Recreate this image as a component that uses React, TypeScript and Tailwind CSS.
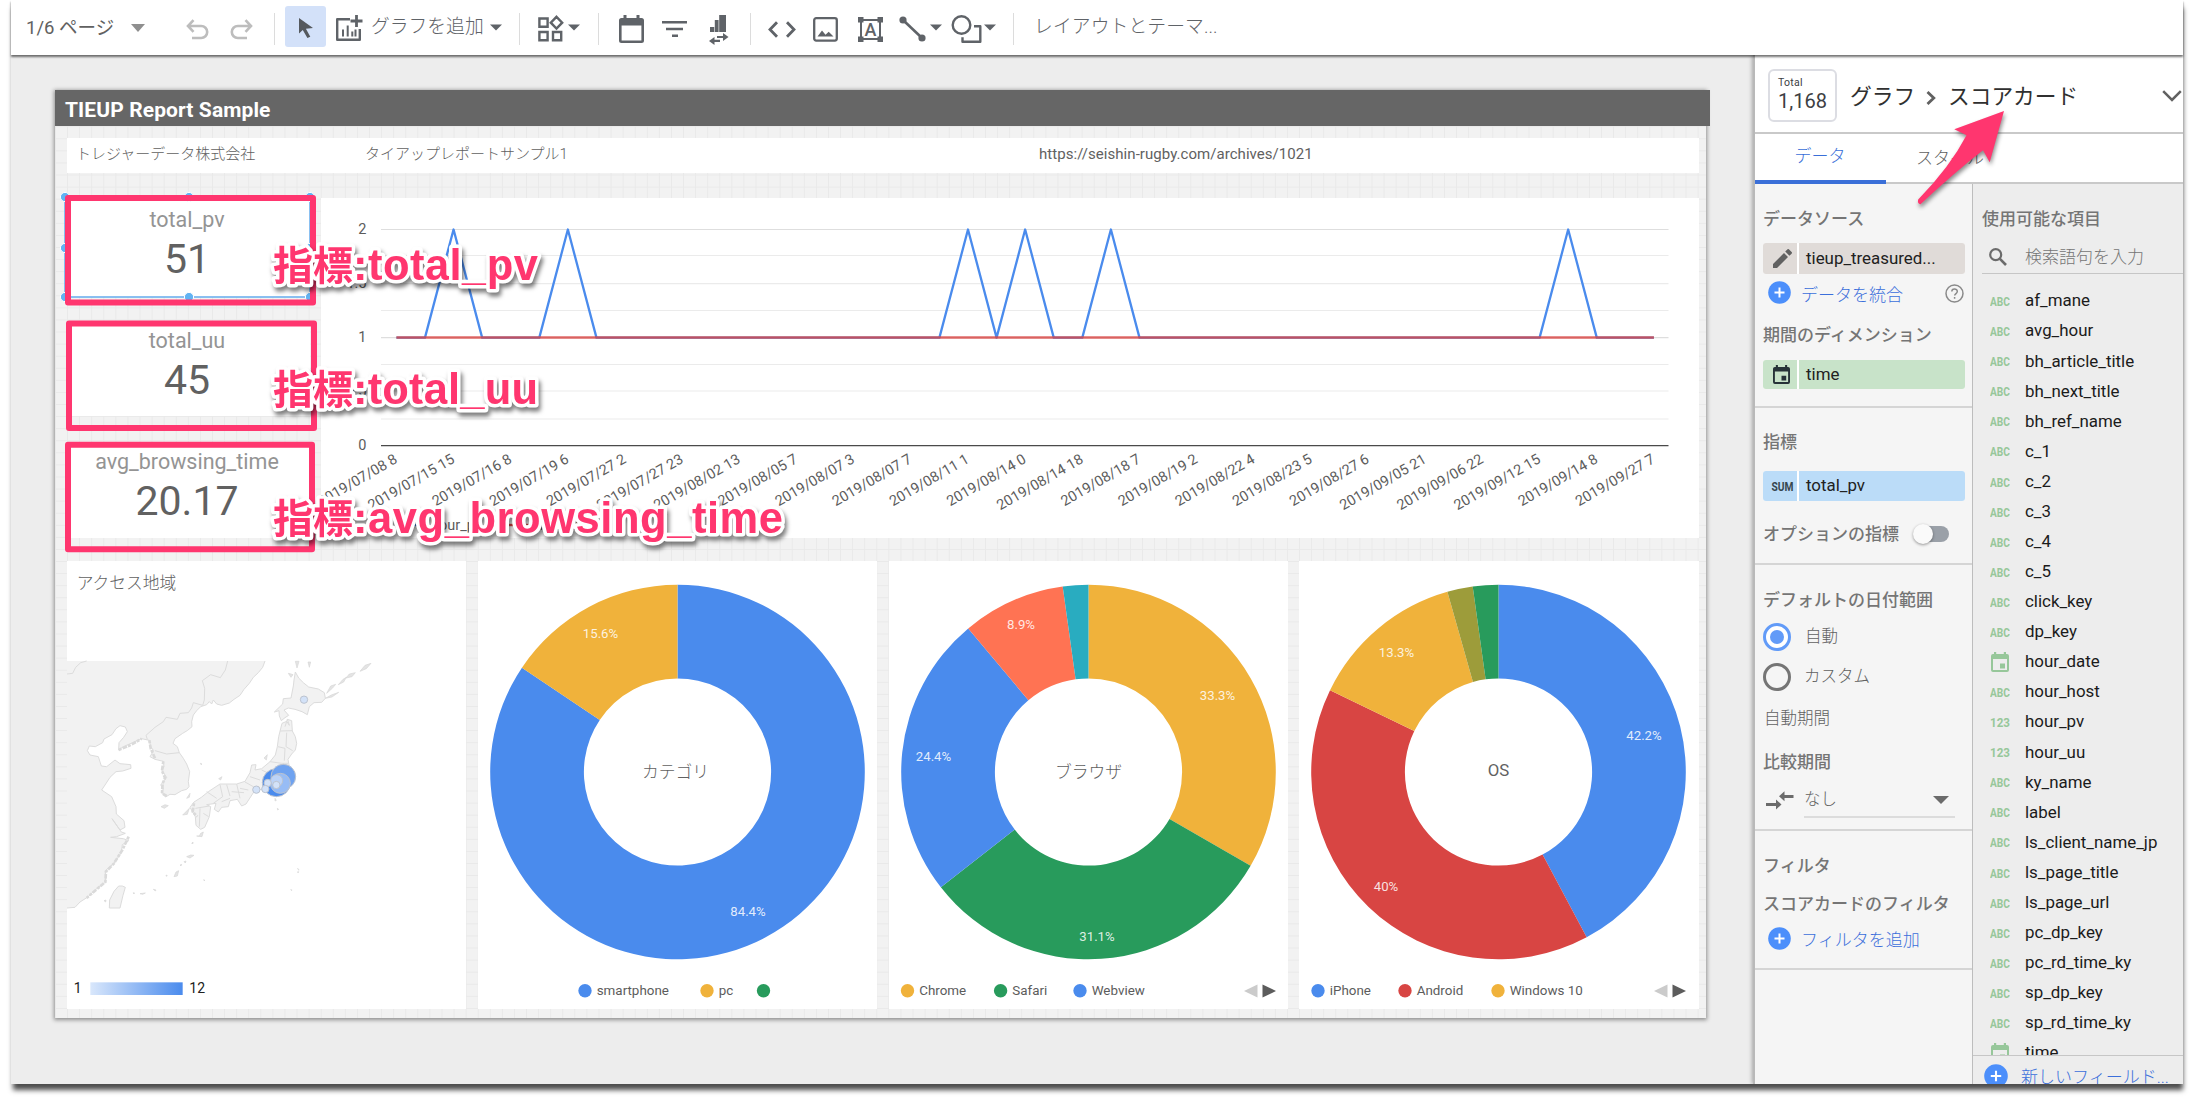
import React from "react";

const JP = "font-['Roboto','Noto_Sans_CJK_JP',sans-serif]";

/* ---------- toolbar ---------- */

const Caret = ({ className = "" }: { className?: string }) => (
  <svg className={`shrink-0 ${className}`} width="12" height="7" viewBox="0 0 12 7">
    <path d="M0 0.5h12L6 6.5z" fill="currentColor" />
  </svg>
);

const Divider = ({ className = "" }: { className?: string }) => (
  <div className={`h-8 w-px shrink-0 bg-[#dcdcdc] ${className}`} />
);

function Toolbar() {
  return (
    <div className="relative z-10 flex h-[55px] shrink-0 items-start bg-white text-[#5f6368] shadow-[0_2px_2px_0_rgba(0,0,0,0.55)]">
      <div className="mt-[14px] ml-[15px] w-[92px] shrink-0 text-[18.5px] leading-7 whitespace-nowrap text-[#616161]">
        1/6 ページ
      </div>
      <svg className="mt-6 ml-[13px] shrink-0 text-[#8f8f8f]" width="14" height="8" viewBox="0 0 14 8">
        <path d="M0 0h14L7 8z" fill="currentColor" />
      </svg>
      <svg className="mt-[19px] ml-[41px] shrink-0" width="23" height="21" viewBox="0 0 23 21" fill="none" stroke="#bdbdbd" strokeWidth="2.6">
        <path d="M7.5 1.2 2 7l5.5 5.8M2 7h13.2a6 6 0 0 1 0 12H6" />
      </svg>
      <svg className="mt-[19px] ml-[21px] shrink-0" width="23" height="21" viewBox="0 0 23 21" fill="none" stroke="#bdbdbd" strokeWidth="2.6">
        <path d="M15.5 1.2 21 7l-5.5 5.8M21 7H7.8a6 6 0 0 0 0 12H17" />
      </svg>
      <Divider className="mt-[13px] ml-[21px]" />
      <div className="mt-[6px] ml-[10px] flex h-[41px] w-[41px] shrink-0 items-center justify-center rounded-[3px] bg-[#d3e1f9]">
        <svg className="mt-1" width="14" height="21" viewBox="0 0 14 21" fill="#55595e">
          <path d="M0 0v15.5l3.8-3.6 4.6 8.2 2.9-1.4-4.4-8L14 10z" />
        </svg>
      </div>
      <svg className="mt-[15px] ml-[9px] shrink-0" width="28" height="27" viewBox="0 0 28 27" fill="none" stroke="currentColor" strokeWidth="2.4">
        <path d="M15 4.2H2.2v20.6h22.600V14" strokeLinejoin="round" />
        <path d="M21.500 0v12M15.500 6h12" strokeWidth="2.800" />
        <path d="M8 21.500v-7M12.700 21.500v-11M17.300 21.500v-5M20.500 21.500v-7" strokeWidth="2" />
      </svg>
      <div className="mt-[13px] ml-[8px] w-[117px] shrink-0 text-[18.8px] leading-7 font-light whitespace-nowrap">グラフを追加</div>
      <Caret className="mt-6 ml-[2px]" />
      <Divider className="mt-[13px] ml-[17px]" />
      <svg className="mt-[15px] ml-[18px] shrink-0" width="26" height="27" viewBox="0 0 26 27" fill="none" stroke="currentColor" strokeWidth="2.4">
        <path d="M1.400 3.500h8.200v8.200H1.400zM1.400 17h8.200v8.200H1.400zM15 17h8.200v8.200H15zM18.500 1.800l5.700 5.900-5.700 5.900-5.700-5.900z" />
      </svg>
      <Caret className="mt-6 ml-[4px]" />
      <Divider className="mt-[13px] ml-[18px]" />
      <svg className="mt-[15px] ml-[20px] shrink-0" width="25" height="28" viewBox="0 0 25 28">
        <path d="M2.500 3h20A2.500 2.500 0 0 1 25 5.500v20a2.500 2.500 0 0 1-2.500 2.500h-20A2.500 2.500 0 0 1 0 25.500v-20A2.500 2.500 0 0 1 2.500 3zM2.600 10.500v15h19.800v-15z" fill="currentColor" fillRule="evenodd" />
        <path d="M4.500 0h3v4h-3zM17.500 0h3v4h-3z" fill="currentColor" />
      </svg>
      <svg className="mt-[20px] ml-[18px] shrink-0" width="25" height="18" viewBox="0 0 25 18" stroke="currentColor" strokeWidth="2.500">
        <path d="M0 2.200h25M4 9h17M10 15.800h6" />
      </svg>
      <svg className="mt-[15px] ml-[22px] shrink-0" width="20" height="30" viewBox="0 0 20 30" fill="currentColor">
        <path d="M1 12h4.500V5H10V0h7v17H1z" />
        <path d="M9.800 0v17M5.500 5v12" stroke="#fff" strokeWidth="0.600" />
        <path d="M8 21h6v-3l5.500 4-5.500 4v-3H8zM11 24.800H5.500V22L0 26l5.500 4v-3H11z" />
      </svg>
      <Divider className="mt-[13px] ml-[21px]" />
      <svg className="mt-[21px] ml-[17px] shrink-0" width="28" height="17" viewBox="0 0 28 17" fill="none" stroke="currentColor" strokeWidth="2.800">
        <path d="M9 1.200 2 8.500l7 7.300M19 1.200l7 7.300-7 7.300" />
      </svg>
      <svg className="mt-[17px] ml-[17px] shrink-0" width="25" height="25" viewBox="0 0 25 25" fill="none" stroke="currentColor" strokeWidth="2.300">
        <rect x="1.200" y="1.200" width="22.600" height="22.400" rx="2" />
        <path d="M4.500 19.500l4.500-6 3.500 4.200 3.200-2.900 4.800 4.700z" fill="currentColor" stroke="none" />
      </svg>
      <svg className="mt-[17px] ml-[20px] shrink-0" width="25" height="25" viewBox="0 0 25 25" fill="currentColor">
        <path d="M3 3h19v19H3z" fill="none" stroke="currentColor" strokeWidth="2" />
        <path d="M0 0h5.500v5.500H0zM19.500 0H25v5.500h-5.500zM0 19.500h5.500V25H0zM19.500 19.500H25V25h-5.500z" />
        <text x="12.500" y="19" fontSize="18" textAnchor="middle" fontFamily="Roboto" fontWeight="500">A</text>
      </svg>
      <svg className="mt-[16px] ml-[16px] shrink-0" width="27" height="26" viewBox="0 0 27 26">
        <path d="M4 4l19 18" stroke="currentColor" strokeWidth="2.600" />
        <circle cx="4" cy="4" r="3.600" fill="currentColor" />
        <circle cx="23" cy="22" r="3.600" fill="currentColor" />
      </svg>
      <Caret className="mt-6 ml-[4px]" />
      <svg className="mt-[15px] ml-[9px] shrink-0" width="31" height="28" viewBox="0 0 31 28" fill="none" stroke="currentColor" strokeWidth="2.400">
        <circle cx="10.500" cy="10" r="8.800" />
        <path d="M23 11.200h6.300v15.500H11.500v-4.500" strokeLinejoin="round" />
      </svg>
      <Caret className="mt-6 ml-[2px]" />
      <Divider className="mt-[13px] ml-[17px]" />
      <div className="mt-[13px] ml-[20px] text-[18.8px] leading-7 font-light tracking-[0.1px] whitespace-nowrap">レイアウトとテーマ...</div>
    </div>
  );
}

/* ---------- report widgets ---------- */

function Scorecard({ name, value, className }: { name: string; value: string; className: string }) {
  return (
    <div className={`flex w-[243px] flex-col items-center bg-white pr-[3px] ${className}`}>
      <div className="text-[21.5px] leading-6 text-[#949494]">{name}</div>
      <div className="mt-[3px] text-[41px] leading-[48px] text-[#616161]">{value}</div>
    </div>
  );
}

const AXIS = [
  "2019/07/08 8", "2019/07/15 15", "2019/07/16 8", "2019/07/19 6", "2019/07/27 2", "2019/07/27 23",
  "2019/08/02 13", "2019/08/05 7", "2019/08/07 3", "2019/08/07 7", "2019/08/11 1", "2019/08/14 0",
  "2019/08/14 18", "2019/08/18 7", "2019/08/19 2", "2019/08/22 4", "2019/08/23 5", "2019/08/27 6",
  "2019/09/05 21", "2019/09/06 22", "2019/09/12 15", "2019/09/14 8", "2019/09/27 7",
];
const PEAKS = [2, 6, 20, 22, 25, 41];
const px = (i: number) => 75.4 + i * 28.58;

function LineChart() {
  const pts = Array.from({ length: 45 }, (_, i) => `${px(i)},${PEAKS.includes(i) ? 31.500 : 139.600}`).join(" ");
  const ticks: [string, number][] = [["2", 31.5], ["1.5", 85.7], ["1", 139.6], ["0.5", 193.5], ["0", 247.7]];
  return (
    <svg className="ml-[11px] shrink-0 bg-white" width="1378" height="340" viewBox="0 0 1378 340" fontFamily="Roboto">
      {[31.5, 57.5, 85.7, 112.5, 139.600, 166.500, 193, 221].map((y, i) => (
        <path key={y} d={`M60 ${y}H1347.500`} stroke={i % 4 === 0 ? "#dedede" : "#ebebeb"} strokeWidth="1.200" />
      ))}
      <path d="M60 247.700H1347.500" stroke="#4a4a4a" strokeWidth="1.300" />
      {ticks.map(([t, y]) => (
        <text key={t} x="45.500" y={y + 4.700} fontSize="14.500" textAnchor="end" fill="#5c5c5c">{t}</text>
      ))}
      <polyline points={pts} fill="none" stroke="#4a8bed" strokeWidth="2.300" strokeLinejoin="round" />
      <path d={`M75.400 139.600H${px(44)}`} stroke="#d84543" strokeWidth="2.500" opacity="0.800" />
      {AXIS.map((t, i) => (
        <text key={t} transform={`translate(${px(i * 2) + 2} ${264}) rotate(-30)`} fontSize="14.500" textAnchor="end" fill="#5c5c5c">{t}</text>
      ))}
      <path d="M83 327h22" stroke="#4a8bed" strokeWidth="2.400" />
      <text x="110" y="332" fontSize="14.500" fill="#5c5c5c">hour_pv</text>
      <path d="M187 327h22" stroke="#d84543" strokeWidth="2.400" />
      <text x="214" y="332" fontSize="14.500" fill="#5c5c5c">hour_uu</text>
    </svg>
  );
}

const LAND = [
  "M81 333H675L668 352L655 368L640 382L628 400L612 418L600 436L582 448L568 459L545 466L530 462L520 450L515 462L508 455L500 464L482 470L470 482L460 495L455 515L456 530L443 541L428 550L405 566L399 580L412 590L418 608L430 625L440 642L449 665L445 695L447 710L440 718L425 722L405 734L390 733L377 741L366 730L370 715L362 705L372 692L380 682L366 662L372 650L370 634L345 628L330 620L341 602L332 590L328 571L305 566L280 577L250 590L236 600L237 578L251 562L262 545L256 531L240 527L228 536L216 554L192 567L188 578L166 590L148 588L142 602L150 615L175 620L184 648L200 650L225 630L240 641L272 644L273 655L248 663L228 665L210 682L197 702L185 720L215 740L228 770L229 792L252 812L255 832L240 840L216 806L244 846L256 850L230 860L212 862L250 866L266 872L247 884L244 908L222 940L196 962L197 996L165 1020L145 1040L120 1056L105 1072L81 1074Z",
  "M247 1008L256 1012L249 1036L240 1074H208L209 1050L222 1024L236 1008Z",
  "M766 366L776 384L790 398L806 411L835 417L853 428L856 445L845 457L822 458L808 470L802 494L786 485L765 478L745 474L732 480L746 496L735 503L724 512L718 498L717 482L703 486L728 462L730 446L753 444L760 408L762 390Z",
  "M726 520L740 514L748 526L742 508L755 512L757 543L766 560L770 580L766 600L755 612L744 628L748 650L760 680L742 712L700 726L682 724L660 718L640 728L618 762L605 768L592 748L570 752L565 770L545 772L535 786L523 778L528 760L500 764L512 770L508 800L494 832L482 838L468 826L466 800L450 772L462 756L484 742L505 725L540 702L590 702L615 694L630 668L635 645L648 644L645 660L665 656L690 635L706 615L712 590L716 560Z",
];
const BORDERS = [
  "M563 333L556 360L541 383L512 374L487 392L494 415L493 450L488 466L460 458L455 474L445 488L420 490L412 508L378 502L370 515L345 532L318 556L322 568",
  "M345 602L380 612L418 608",
  "M720 543L757 542M740 548L738 590L758 602M714 590L735 595L733 632M690 635L725 640L745 640M742 508L735 530M665 660L690 672M630 680L660 690M615 696L640 710M560 704L570 738M590 702L600 745M540 704L548 740L520 760M500 725L530 745M600 715L625 720M466 775L508 768M480 775L478 830M490 790L506 800M575 725L612 728M545 755L570 745",
];
const ISLANDS =
  "M860 430l12-22 15-5-10 12zM895 404l14-16 10-6-8 14zM918 384l10-12 18-4-10 12zM960 364l15-18 18-6-14 16zM856 445l18-10 22-8-20 14zM766 334l5 20 6-20zM804 336l4 16 4-16zM745 370l8 12 6-8-6-2zM672 624l10-10-3 16zM536 686l10-6-4 10zM363 770l12-6 10 3-12 8zM440 745l10-15-2 12zM428 795l12-12 8-8-6 18zM470 858l8 0 4-8 8-4-4 14zM440 920l12-5 10 1-12 8zM402 980l6-14 8-4-4 16zM432 935l6-2-2 6zM300 1031l16-2-8 4zM340 1018l8 2-2 3zM705 745l4 6-4 2zM712 775l4 3-3 2zM481 640l5 2-3 2zM491 989l4 2-3 1zM752 1019l3 0 0 3zM773 955l3 3 0 3zM773 965l3 0-2 4zM280 1028l4 1-3 3zM192 1052l6-2-1 6zM378 975l4 2-3 2zM420 945l5-2-2 5zM455 880l4-4 0 5z";

function GeoMap() {
  return (
    <svg className="w-[399px] shrink-0 bg-white" width="399" height="448" viewBox="81 33 1197 1344" fontFamily="Roboto, 'Noto Sans CJK JP'">
      <defs>
        <linearGradient id="scale">
          <stop offset="0" stopColor="#d9e7fb" />
          <stop offset="1" stopColor="#4a8bed" />
        </linearGradient>
      </defs>
      <text x="110" y="118" fontSize="50.300" fontWeight="300" fill="#616161">アクセス地域</text>
      <g fill="#f2f2f2" stroke="#dcdcdc" strokeWidth="3" strokeLinejoin="round">
        {LAND.slice(1).map((d) => <path key={d} d={d} />)}
      </g>
      <path d={LAND[0]} fill="#f2f2f2" />
      <path d={LAND[0].replace("M81 333H675L", "M675 333L").replace("L81 1074Z", "L81 1074")} fill="none" stroke="#dcdcdc" strokeWidth="3" strokeLinejoin="round" />
      <path d="M81 372L98 370L107 352L122 338L140 333" fill="none" stroke="#dcdcdc" strokeWidth="3" />
      {BORDERS.map((d) => <path key={d} d={d} fill="none" stroke="#dcdcdc" strokeWidth="3" strokeLinejoin="round" />)}
      <path d="M370 634L366 662L375 684L368 700L366 730L380 738M328 571L332 595L345 625M266 860L247 900L222 940L198 965L196 996L165 1022L140 1044M462 760L458 785L472 800M236 600L270 586L305 566" fill="none" stroke="#dadada" strokeWidth="8" strokeDasharray="9 4 14 3" />
      <path d={ISLANDS} fill="#e4e4e4" stroke="#d6d6d6" strokeWidth="2" />
      <g stroke="#bcc3cf" strokeWidth="3">
        <circle cx="792" cy="449" r="11" fill="#d3e2f8" />
        <circle cx="709" cy="698" r="42" fill="#4a8bed" />
        <circle cx="730" cy="680" r="37" fill="#6ea2f0" />
        <circle cx="721" cy="700" r="30" fill="#97bcf5" />
        <circle cx="710" cy="692" r="18" fill="#bcd3f7" />
        <circle cx="709" cy="705" r="11" fill="#d3e2f8" />
        <circle cx="683" cy="699" r="11" fill="#d3e2f8" />
        <circle cx="676" cy="717" r="11" fill="#d3e2f8" />
        <circle cx="649" cy="719" r="11" fill="#d3e2f8" />
      </g>
      <rect x="151" y="1297" width="277" height="38" fill="url(#scale)" />
      <text x="101" y="1329" fontSize="42" fill="#212121">1</text>
      <text x="448" y="1329" fontSize="42" fill="#212121">12</text>
    </svg>
  );
}

type Slice = { pct: number; color: string; label?: string; lx?: number; ly?: number };
type Legend = { x: number; color: string; name: string };

function Donut({ title, slices, legend, pager, width, ty = 217 }: { title: string; slices: Slice[]; legend: Legend[]; pager?: boolean; width: number; ty?: number }) {
  const cx = 199.500;
  const cy = 211;
  const R = 187.300;
  const r = 93.600;
  let acc = 0;
  const at = (t: number, rad: number) => `${cx + rad * Math.sin(t * 2 * Math.PI)} ${cy - rad * Math.cos(t * 2 * Math.PI)}`;
  return (
    <svg className="shrink-0 bg-white" width={width} height="448" viewBox={`0 0 ${width} 448`} fontFamily="Roboto, 'Noto Sans CJK JP'">
      {slices.map((s) => {
        const a = acc;
        const b = (acc += s.pct / 100);
        const big = s.pct > 50 ? 1 : 0;
        return <path key={s.color + a} fill={s.color} d={`M${at(a, R)}A${R} ${R} 0 ${big} 1 ${at(b, R)}L${at(b, r)}A${r} ${r} 0 ${big} 0 ${at(a, r)}Z`} />;
      })}
      {slices.map((s) => s.label && (
        <text key={s.label} x={s.lx} y={(s.ly ?? 0) + 4} fontSize="13.200" textAnchor="middle" fill="#fff" fillOpacity="0.850">{s.label}</text>
      ))}
      <text x={cx - (pager ? 0 : 2)} y={ty} fontSize="16.800" fontWeight={title === "OS" ? 400 : 300} textAnchor="middle" fill="#616161">{title}</text>
      {legend.map((l) => (
        <g key={l.x}>
          <circle cx={l.x} cy="429.700" r="6.700" fill={l.color} />
          <text x={l.x + 11.700} y="434" fontSize="13.400" fill="#5c5c5c">{l.name}</text>
        </g>
      ))}
      {pager && <path d="M355 430l13.500-6.500v13z" fill="#cbcbcb" />}
      {pager && <path d="M387 430l-13.500-6.500v13z" fill="#5c5c5c" />}
    </svg>
  );
}

function Report() {
  return (
    <div className="relative mt-[35px] ml-[44px] h-[928px] w-[1651px] bg-[#f2f2f2] bg-[linear-gradient(to_right,#e9e9e9_1px,transparent_1px),linear-gradient(to_bottom,#e9e9e9_1px,transparent_1px)] bg-[size:12.080px_12.080px] shadow-[0_1px_4px_1px_rgba(0,0,0,0.4)]">
      <div className="flex h-9 w-[1655px] items-center bg-[#666] pt-1.5 pl-[10px] text-[21px] font-bold text-white">
        <span className="tracking-[0.100px] whitespace-nowrap">TIEUP Report Sample</span>
      </div>
      <div className="mt-3 ml-3 flex h-[35px] w-[1632px] items-center bg-white pb-[3px] text-[15px] text-[#616161]">
        <span className="w-[288px] pl-[9px] font-light">トレジャーデータ株式会社</span>
        <span className="w-[672px] pl-[10px] font-light">タイアップレポートサンプル1</span>
        <span className="pl-3 tracking-[0.050px]">https://seishin-rugby.com/archives/1021</span>
      </div>
      <div className="mt-[25px] ml-3 flex h-[340px]">
        <div className="flex w-[243px] shrink-0 flex-col">
          <Scorecard name="total_pv" value="51" className="h-[99px] pt-[10px]" />
          <Scorecard name="total_uu" value="45" className="mt-[24px] h-[95px] pt-[8px]" />
          <Scorecard name="avg_browsing_time" value="20.17" className="mt-[27px] h-[95px] pt-[7px]" />
        </div>
        <LineChart />
      </div>
      <div className="mt-[23px] ml-3 flex h-[448px]">
        <GeoMap />
        <div className="ml-3 flex">
          <Donut
            width={399} title="カテゴリ"
            slices={[
              { pct: 84.4, color: "#4a8bed", label: "84.4%", lx: 270, ly: 351 },
              { pct: 15.6, color: "#f0b23b", label: "15.6%", lx: 122.500, ly: 72.500 },
            ]}
            legend={[
              { x: 107, color: "#4a8bed", name: "smartphone" },
              { x: 229, color: "#f0b23b", name: "pc" },
              { x: 285.500, color: "#289b5c", name: "" },
            ]}
          />
        </div>
        <div className="ml-3 flex">
          <Donut
            width={399} title="ブラウザ" pager
            slices={[
              { pct: 33.35, color: "#f0b23b", label: "33.3%", lx: 328.500, ly: 134.500 },
              { pct: 31.1, color: "#289b5c", label: "31.1%", lx: 208, ly: 375.500 },
              { pct: 24.45, color: "#4a8bed", label: "24.4%", lx: 44.500, ly: 195.500 },
              { pct: 8.900, color: "#ff7353", label: "8.9%", lx: 132, ly: 64 },
              { pct: 2.200, color: "#29acc0" },
            ]}
            legend={[
              { x: 18.500, color: "#f0b23b", name: "Chrome" },
              { x: 111.600, color: "#289b5c", name: "Safari" },
              { x: 191, color: "#4a8bed", name: "Webview" },
            ]}
          />
        </div>
        <div className="ml-[11px] flex">
          <Donut
            width={400} title="OS" pager ty={214.500}
            slices={[
              { pct: 42.2, color: "#4a8bed", label: "42.2%", lx: 345, ly: 174.500 },
              { pct: 40, color: "#d84543", label: "40%", lx: 87, ly: 326 },
              { pct: 13.4, color: "#f0b23b", label: "13.3%", lx: 97.500, ly: 92 },
              { pct: 2.2, color: "#9d9c3a" },
              { pct: 2.2, color: "#289b5c" },
            ]}
            legend={[
              { x: 19, color: "#4a8bed", name: "iPhone" },
              { x: 106, color: "#d84543", name: "Android" },
              { x: 199, color: "#f0b23b", name: "Windows 10" },
            ]}
          />
        </div>
      </div>
    </div>
  );
}

/* ---------- properties panel ---------- */

const Heading = ({ children, className = "" }: { children: React.ReactNode; className?: string }) => (
  <div className={`ml-2 flex h-6 items-center pt-[3px] text-[17px] font-medium whitespace-nowrap text-[#757575] ${className}`}>{children}</div>
);

const Rule = ({ className = "" }: { className?: string }) => <div className={`h-[2px] w-full bg-[#d5d5d5] ${className}`} />;

const Plus = ({ size = 23 }: { size?: number }) => (
  <svg className="shrink-0" width={size} height={size} viewBox="0 0 23 23">
    <circle cx="11.500" cy="11.500" r="11.300" fill="#4c8ffb" />
    <path d="M11.500 6.500v10M6.500 11.500h10" stroke="#fff" strokeWidth="2" />
  </svg>
);

const DateIcon = ({ size = 18 }: { size?: number }) => (
  <svg className="shrink-0" width={size} height={(size * 20) / 18} viewBox="0 0 18 20" fill="currentColor">
    <path fillRule="evenodd" d="M2 2h14a2 2 0 0 1 2 2v14a2 2 0 0 1-2 2H2a2 2 0 0 1-2-2V4a2 2 0 0 1 2-2zM2 7v11h14V7z" />
    <path d="M3 0h2.200v3H3zM12.800 0H15v3h-2.200zM9 11.500h5v5H9z" />
  </svg>
);

function Chip({ icon, label, className, tone }: { icon: React.ReactNode; label: string; className: string; tone: string }) {
  return (
    <div className={`ml-2 flex w-[202px] gap-[2px] overflow-hidden rounded-[3px] bg-white ${className}`}>
      <div className={`flex w-[34px] items-center justify-center ${tone}`}>{icon}</div>
      <div className={`flex flex-1 items-center pl-[7px] text-[16.900px] whitespace-nowrap text-[#212121] ${tone}`}>{label}</div>
    </div>
  );
}

const TypeTag = ({ kind }: { kind: string }) =>
  kind === "DATE" ? (
    <span className="flex w-[20px] justify-center"><DateIcon /></span>
  ) : (
    <svg width="20" height="12" viewBox="0 0 20 12">
      <text x="0" y="11" fontSize="13.500" fontFamily="Roboto" fontWeight="700" fill="currentColor" textLength="20" lengthAdjust="spacingAndGlyphs">{kind}</text>
    </svg>
  );

const FIELDS: [string, string][] = [
  ["ABC", "af_mane"], ["ABC", "avg_hour"], ["ABC", "bh_article_title"], ["ABC", "bh_next_title"], ["ABC", "bh_ref_name"],
  ["ABC", "c_1"], ["ABC", "c_2"], ["ABC", "c_3"], ["ABC", "c_4"], ["ABC", "c_5"], ["ABC", "click_key"], ["ABC", "dp_key"],
  ["DATE", "hour_date"], ["ABC", "hour_host"], ["123", "hour_pv"], ["123", "hour_uu"], ["ABC", "ky_name"], ["ABC", "label"],
  ["ABC", "ls_client_name_jp"], ["ABC", "ls_page_title"], ["ABC", "ls_page_url"], ["ABC", "pc_dp_key"], ["ABC", "pc_rd_time_ky"],
  ["ABC", "sp_dp_key"], ["ABC", "sp_rd_time_ky"], ["DATE", "time"],
];

function Settings() {
  return (
    <div className="flex w-[217px] shrink-0 flex-col bg-[#f5f5f5]">
      <Heading className="mt-[22px]">データソース</Heading>
      <Chip className="mt-[13px] h-[31px]" tone="bg-[#e0dbd8]" label="tieup_treasured..." icon={
        <svg className="ml-1" width="19" height="19" viewBox="0 0 19 19" fill="#616161"><path d="M0 15v4h4L15 8l-4-4zM18.600 4.700a1.300 1.300 0 0 0 0-1.800L16.100.4a1.300 1.300 0 0 0-1.800 0L12.200 2.600l4.200 4.200z" /></svg>
      } />
      <div className="mt-[5px] ml-[13px] flex h-[26px] items-center">
        <Plus />
        <span className="mt-[7px] ml-[10px] w-[140px] text-[17px] font-light text-[#3b6fdb]">データを統合</span>
        <svg className="mt-0.5 ml-[4px]" width="19" height="19" viewBox="0 0 19 19" fill="none" stroke="#8a8a8a" strokeWidth="1.500">
          <circle cx="9.500" cy="9.500" r="8.500" />
          <path d="M6.800 7.600c0-3.400 5.500-3.400 5.500-.1 0 2-2.600 2.100-2.600 4.100M9.600 13v1.800" />
        </svg>
      </div>
      <Heading className="mt-[17px]">期間のディメンション</Heading>
      <Chip className="mt-[14px] h-[29px]" tone="bg-[#c8e3c9]" label="time" icon={<span className="ml-0.5 text-[#263238]"><DateIcon size={17} /></span>} />
      <Rule className="mt-[17px]" />
      <Heading className="mt-[21px]">指標</Heading>
      <Chip className="mt-[18px] h-[30px]" tone="bg-[#bbdcf8]" label="total_pv" icon={
        <svg className="ml-1" width="23" height="12" viewBox="0 0 23 12"><text x="0.500" y="10.500" fontSize="12.500" fontWeight="700" fontFamily="Roboto" fill="#37474f" textLength="22" lengthAdjust="spacingAndGlyphs">SUM</text></svg>
      } />
      <div className="mt-[20px] flex h-6 items-center">
        <Heading className="w-[146px]">オプションの指標</Heading>
        <div className="relative mt-0.5 ml-[8px] h-4 w-8 rounded-full bg-[#9aa0a8]">
          <div className="absolute -top-[2px] -left-[4px] h-5 w-5 rounded-full bg-[#fafafa] shadow-[0_1px_3px_rgba(0,0,0,0.4)]" />
        </div>
      </div>
      <Rule className="mt-[18px]" />
      <Heading className="mt-[22px]">デフォルトの日付範囲</Heading>
      <div className="mt-[12px] ml-2 flex h-7 items-center text-[16.500px] font-light text-[#616161]">
        <div className="flex h-7 w-7 items-center justify-center rounded-full border-[3.500px] border-[#629bf8] bg-white"><div className="h-[14px] w-[14px] rounded-full bg-[#629bf8]" /></div>
        <span className="mt-px ml-[14px]">自動</span>
      </div>
      <div className="mt-[12px] ml-2 flex h-7 items-center text-[16.500px] font-light text-[#616161]">
        <div className="h-7 w-7 rounded-full border-[3.500px] border-[#757575]" />
        <span className="mt-px ml-[13px]">カスタム</span>
      </div>
      <div className="mt-[15px] ml-[9px] flex h-6 items-center pt-[3px] text-[16.500px] font-light text-[#616161]">自動期間</div>
      <Heading className="mt-[19px]">比較期間</Heading>
      <div className="mt-[10px] ml-[11px] flex h-[35px]">
        <svg className="mt-[8px] shrink-0" width="28" height="19" viewBox="0 0 28 19" fill="#6b6b6b">
          <path d="M0 12h10V8.500l5.500 5-5.500 5V15H0zM27.500 4H18.500V.2l-5.500 5 5.500 5V7h9z" />
        </svg>
        <div className="ml-[10px] flex w-[151px] justify-between border-b-2 border-[#dcdcdc] text-[#616161]">
          <span className="mt-[5px] text-[16.500px] font-light">なし</span>
          <svg className="mt-[13px] mr-[6px]" width="16" height="8" viewBox="0 0 16 8"><path d="M0 0h16L8 8z" fill="#6b6b6b" /></svg>
        </div>
      </div>
      <Rule className="mt-[11px]" />
      <Heading className="mt-[22px]">フィルタ</Heading>
      <Heading className="mt-[14px]">スコアカードのフィルタ</Heading>
      <div className="mt-[10px] ml-[13px] flex h-[26px] items-center">
        <Plus />
        <span className="mt-[6px] ml-[10px] text-[17px] font-light text-[#3b6fdb]">フィルタを追加</span>
      </div>
      <Rule className="mt-[17px]" />
    </div>
  );
}

function Fields() {
  return (
    <div className="flex min-w-0 flex-1 flex-col border-l border-[#bdbdbd] bg-[#ededed]">
      <div className="mt-[22px] ml-[9px] flex h-6 shrink-0 items-center pt-[3px] text-[17px] font-medium text-[#757575]">使用可能な項目</div>
      <div className="mt-[10px] ml-[9px] flex h-[34px] shrink-0 items-center border-b border-[#c6c6c6] text-[17px] font-light text-[#757575]">
        <svg className="ml-[7px]" width="18" height="18" viewBox="0 0 18 18" fill="none" stroke="#6b6b6b" strokeWidth="2.200">
          <circle cx="6.700" cy="6.700" r="5.500" /><path d="M10.700 10.700l6.300 6.300" strokeWidth="2.600" />
        </svg>
        <span className="mt-[3px] ml-[18px]">検索語句を入力</span>
      </div>
      <div className="flex min-h-0 flex-1 flex-col overflow-hidden pt-[12px] pl-[17px]">
        {FIELDS.map(([k, n]) => (
          <div key={n} className="flex h-[30.080px] shrink-0 items-center text-[#97c79a]">
            <TypeTag kind={k} />
            <span className="ml-[15px] text-[16.900px] whitespace-nowrap text-[#1b1b1b]">{n}</span>
          </div>
        ))}
      </div>
      <div className="flex h-[29px] shrink-0 items-start overflow-hidden border-t border-[#c6c6c6] pl-[11px]">
        <span className="mt-[8px]"><Plus size={24} /></span>
        <span className="mt-[9px] ml-[13px] text-[17px] font-light whitespace-nowrap text-[#3b6fdb]">新しいフィールド...</span>
      </div>
    </div>
  );
}

function Panel() {
  return (
    <div className="flex w-[430px] shrink-0 flex-col border-l-2 border-[#b9b9b9] bg-white pt-[4px] shadow-[-1px_0_4px_rgba(0,0,0,0.3)]">
      <div className="flex h-[75px] shrink-0 items-center border-b-2 border-[#c9c9c9] text-[#303030]">
        <div className="ml-[13px] flex h-[53px] w-[69px] flex-col rounded-[6px] border-2 border-[#dcdde3] pt-[6px] pl-[8px] text-[#3c4043]">
          <span className="text-[10.500px] leading-3 tracking-[0.300px]">Total</span>
          <span className="text-[20px] leading-[24px]">1,168</span>
        </div>
        <span className="mt-1 ml-[13px] w-[66px] text-[21.800px] whitespace-nowrap">グラフ</span>
        <svg className="mt-[5px] ml-[10px]" width="10" height="14" viewBox="0 0 10 14" fill="none" stroke="#616161" strokeWidth="2.800"><path d="M1.500 1l6.300 6-6.300 6" /></svg>
        <span className="mt-1 ml-[12px] w-[134px] text-[21.700px] whitespace-nowrap">スコアカード</span>
        <svg className="ml-[80px] shrink-0" width="20" height="12" viewBox="0 0 20 12" fill="none" stroke="#616161" strokeWidth="2.500"><path d="M1.200 1.200L10 10l8.800-8.800" /></svg>
      </div>
      <div className="flex h-[50px] shrink-0 border-b-2 border-[#c9c9c9] text-[17px] font-light">
        <div className="-mb-[2px] flex w-[131px] items-center justify-center border-b-4 border-[#3a6fd8] pr-px text-[#3a6fd8]">データ</div>
        <div className="flex w-[131px] items-center justify-center pt-0.5 pr-[3px] text-[#616161]">スタイル</div>
      </div>
      <div className="flex min-h-0 flex-1">
        <Settings />
        <Fields />
      </div>
    </div>
  );
}

/* ---------- callouts drawn over the window ---------- */

const HANDLES: [number, number][] = [[65, 197], [189, 197], [310, 197], [65, 248], [310, 248], [65, 297], [189, 297], [310, 297]];

const NOTES: { text: string; y: number; w: number }[] = [
  { text: ":total_pv", y: 279.5, w: 185 },
  { text: ":total_uu", y: 404, w: 185 },
  { text: ":avg_browsing_time", y: 533, w: 430 },
];

function Callouts() {
  return (
    <svg className="pointer-events-none absolute top-0 left-0 z-20" width="2202" height="1104" viewBox="0 0 2202 1104">
      <rect x="65" y="197" width="245" height="100" fill="none" stroke="#6db1ee" strokeWidth="1.600" />
      {HANDLES.map(([x, y]) => <circle key={`${x}-${y}`} cx={x} cy={y} r="4.600" fill="#62b3f3" stroke="#fff" strokeWidth="1" />)}
      <g fill="none" stroke="#ff366f" strokeWidth="6" strokeLinejoin="round">
        <rect x="68" y="198" width="245" height="104.500" />
        <rect x="69" y="323.500" width="245" height="104.500" />
        <rect x="68" y="444.700" width="244" height="104.500" />
      </g>
      <g className="drop-shadow-[2px_4px_2px_rgba(0,0,0,0.5)]" fill="#ff366f" stroke="#fff" strokeWidth="7" strokeLinejoin="round" fontWeight="700" paintOrder="stroke">
        {NOTES.map((n) => (
          <g key={n.text}>
            <text x="273" y={n.y} fontSize="40" fontFamily="'Noto Sans CJK JP', sans-serif">指標</text>
            <text x="353" y={n.y} textLength={n.w} fontSize="43.500" fontFamily="'Liberation Sans', sans-serif">{n.text}</text>
          </g>
        ))}
      </g>
      <path className="drop-shadow-[1px_3px_2px_rgba(0,0,0,0.45)]" d="M2004 111L1954.300 129.300L1966.500 135.300Q1950 167 1918.200 199.500Q1917 203.500 1920.500 204.200Q1955 172 1983 150.200L1989.700 162.300Z" fill="#ff366f" />
    </svg>
  );
}

export default function App() {
  return (
    <div className={`relative h-[1104px] w-[2202px] overflow-hidden bg-white ${JP}`}>
      <div className="ml-[11px] flex h-[1084px] w-[2172px] flex-col bg-[#ededed] shadow-[1px_7px_5px_-1px_rgba(0,0,0,0.7)]">
        <Toolbar />
        <div className="flex min-h-0 flex-1 overflow-hidden">
          <div className="min-w-0 flex-1"><Report /></div>
          <Panel />
        </div>
      </div>
      <Callouts />
    </div>
  );
}
